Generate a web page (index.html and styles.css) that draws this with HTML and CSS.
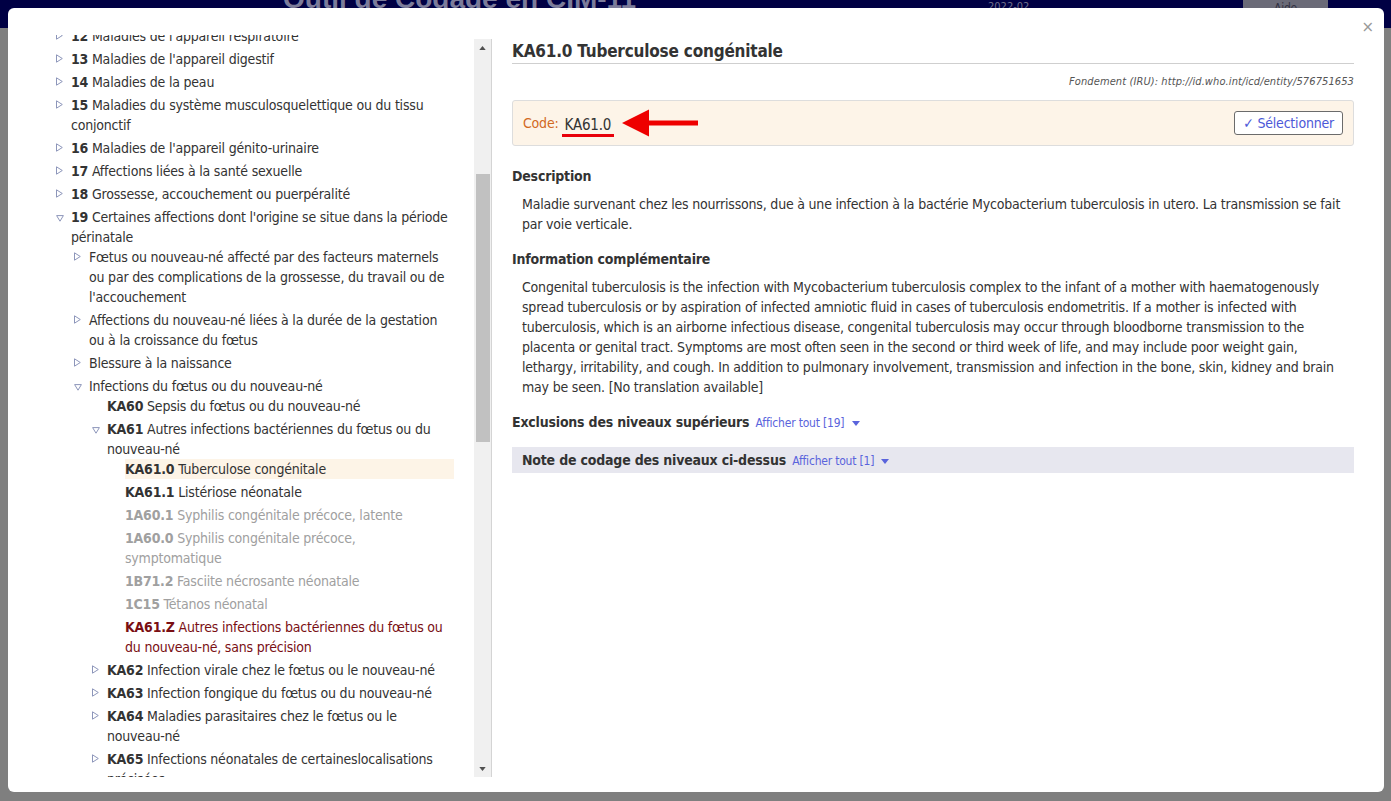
FILE: index.html
```html
<!DOCTYPE html>
<html lang="fr">
<head>
<meta charset="utf-8">
<title>Outil de Codage en CIM-11</title>
<link rel="stylesheet" href="styles.css">
</head>
<body>
<header class="topbar">
  <div class="app-title">Outil de Codage en CIM-11</div>
  <div class="app-version">2022-02</div>
  <div class="app-help">Aide</div>
</header>

<div class="modal">
  <button class="modal-close" type="button">×</button>
  <div class="modal-body">
    <aside class="tree-pane">
      <div class="tree-clip">
        <ul class="tree tree-root">
          <li><div class="row"><span class="tog"><svg class="tri" viewBox="0 0 7 9"><path d="M0.5 0.8 L6.3 4.5 L0.5 8.2 Z"/></svg></span><span class="txt"><b>12</b> Maladies de l'appareil respiratoire</span></div></li>
          <li><div class="row"><span class="tog"><svg class="tri" viewBox="0 0 7 9"><path d="M0.5 0.8 L6.3 4.5 L0.5 8.2 Z"/></svg></span><span class="txt"><b>13</b> Maladies de l'appareil digestif</span></div></li>
          <li><div class="row"><span class="tog"><svg class="tri" viewBox="0 0 7 9"><path d="M0.5 0.8 L6.3 4.5 L0.5 8.2 Z"/></svg></span><span class="txt"><b>14</b> Maladies de la peau</span></div></li>
          <li><div class="row"><span class="tog"><svg class="tri" viewBox="0 0 7 9"><path d="M0.5 0.8 L6.3 4.5 L0.5 8.2 Z"/></svg></span><span class="txt"><b>15</b> Maladies du système musculosquelettique ou du tissu conjonctif</span></div></li>
          <li><div class="row"><span class="tog"><svg class="tri" viewBox="0 0 7 9"><path d="M0.5 0.8 L6.3 4.5 L0.5 8.2 Z"/></svg></span><span class="txt"><b>16</b> Maladies de l'appareil génito-urinaire</span></div></li>
          <li><div class="row"><span class="tog"><svg class="tri" viewBox="0 0 7 9"><path d="M0.5 0.8 L6.3 4.5 L0.5 8.2 Z"/></svg></span><span class="txt"><b>17</b> Affections liées à la santé sexuelle</span></div></li>
          <li><div class="row"><span class="tog"><svg class="tri" viewBox="0 0 7 9"><path d="M0.5 0.8 L6.3 4.5 L0.5 8.2 Z"/></svg></span><span class="txt"><b>18</b> Grossesse, accouchement ou puerpéralité</span></div></li>
          <li>
            <div class="row"><span class="tog"><svg class="tri down" viewBox="0 0 8 7"><path d="M0.6 0.6 L7.4 0.6 L4 6.2 Z"/></svg></span><span class="txt"><b>19</b> Certaines affections dont l'origine se situe dans la période périnatale</span></div>
            <ul class="tree">
              <li><div class="row"><span class="tog"><svg class="tri" viewBox="0 0 7 9"><path d="M0.5 0.8 L6.3 4.5 L0.5 8.2 Z"/></svg></span><span class="txt">Fœtus ou nouveau-né affecté par des facteurs maternels ou par des complications de la grossesse, du travail ou de l'accouchement</span></div></li>
              <li><div class="row"><span class="tog"><svg class="tri" viewBox="0 0 7 9"><path d="M0.5 0.8 L6.3 4.5 L0.5 8.2 Z"/></svg></span><span class="txt">Affections du nouveau-né liées à la durée de la gestation ou à la croissance du fœtus</span></div></li>
              <li><div class="row"><span class="tog"><svg class="tri" viewBox="0 0 7 9"><path d="M0.5 0.8 L6.3 4.5 L0.5 8.2 Z"/></svg></span><span class="txt">Blessure à la naissance</span></div></li>
              <li>
                <div class="row"><span class="tog"><svg class="tri down" viewBox="0 0 8 7"><path d="M0.6 0.6 L7.4 0.6 L4 6.2 Z"/></svg></span><span class="txt">Infections du fœtus ou du nouveau-né</span></div>
                <ul class="tree">
                  <li><div class="row"><span class="tog"></span><span class="txt"><b>KA60</b> Sepsis du fœtus ou du nouveau-né</span></div></li>
                  <li>
                    <div class="row"><span class="tog"><svg class="tri down" viewBox="0 0 8 7"><path d="M0.6 0.6 L7.4 0.6 L4 6.2 Z"/></svg></span><span class="txt"><b>KA61</b> Autres infections bactériennes du fœtus ou du nouveau-né</span></div>
                    <ul class="tree">
                      <li><div class="row"><span class="tog"></span><span class="txt is-selected"><b>KA61.0</b> Tuberculose congénitale</span></div></li>
                      <li><div class="row"><span class="tog"></span><span class="txt"><b>KA61.1</b> Listériose néonatale</span></div></li>
                      <li><div class="row"><span class="tog"></span><span class="txt is-foreign"><b>1A60.1</b> Syphilis congénitale précoce, latente</span></div></li>
                      <li><div class="row"><span class="tog"></span><span class="txt is-foreign"><b>1A60.0</b> Syphilis congénitale précoce, symptomatique</span></div></li>
                      <li><div class="row"><span class="tog"></span><span class="txt is-foreign"><b>1B71.2</b> Fasciite nécrosante néonatale</span></div></li>
                      <li><div class="row"><span class="tog"></span><span class="txt is-foreign"><b>1C15</b> Tétanos néonatal</span></div></li>
                      <li><div class="row"><span class="tog"></span><span class="txt is-residual"><b>KA61.Z</b> Autres infections bactériennes du fœtus ou du nouveau-né, sans précision</span></div></li>
                    </ul>
                  </li>
                  <li><div class="row"><span class="tog"><svg class="tri" viewBox="0 0 7 9"><path d="M0.5 0.8 L6.3 4.5 L0.5 8.2 Z"/></svg></span><span class="txt"><b>KA62</b> Infection virale chez le fœtus ou le nouveau-né</span></div></li>
                  <li><div class="row"><span class="tog"><svg class="tri" viewBox="0 0 7 9"><path d="M0.5 0.8 L6.3 4.5 L0.5 8.2 Z"/></svg></span><span class="txt"><b>KA63</b> Infection fongique du fœtus ou du nouveau-né</span></div></li>
                  <li><div class="row"><span class="tog"><svg class="tri" viewBox="0 0 7 9"><path d="M0.5 0.8 L6.3 4.5 L0.5 8.2 Z"/></svg></span><span class="txt"><b>KA64</b> Maladies parasitaires chez le fœtus ou le nouveau-né</span></div></li>
                  <li><div class="row"><span class="tog"><svg class="tri" viewBox="0 0 7 9"><path d="M0.5 0.8 L6.3 4.5 L0.5 8.2 Z"/></svg></span><span class="txt"><b>KA65</b> Infections néonatales de certaineslocalisations précisées</span></div></li>
                </ul>
              </li>
            </ul>
          </li>
        </ul>
      </div>
      <div class="scrollbar">
        <div class="sb-arrow"><svg viewBox="0 0 8 5"><path d="M0 5 L4 0 L8 5 Z"/></svg></div>
        <div class="sb-track"><div class="sb-thumb"></div></div>
        <div class="sb-arrow"><svg viewBox="0 0 8 5"><path d="M0 0 L8 0 L4 5 Z"/></svg></div>
      </div>
    </aside>

    <main class="detail">
      <h1 class="detail-title">KA61.0 Tuberculose congénitale</h1>
      <div class="foundation">Fondement (IRU): http://id.who.int/icd/entity/576751653</div>
      <div class="codebox">
        <div class="code-line">
          <span class="code-label">Code:</span>
          <span class="code-value">KA61.0</span>
          <svg class="code-arrow" viewBox="0 0 77 28"><path d="M0 14 L27 0.5 L27 11.5 L76 11.5 L76 16.5 L27 16.5 L27 27.5 Z"/></svg>
        </div>
        <button class="select-btn" type="button">✓ Sélectionner</button>
      </div>

      <h2 class="sec-title">Description</h2>
      <p class="sec-text">Maladie survenant chez les nourrissons, due à une infection à la bactérie Mycobacterium tuberculosis in utero. La transmission se fait par voie verticale.</p>

      <h2 class="sec-title sec-gap">Information complémentaire</h2>
      <p class="sec-text">Congenital tuberculosis is the infection with Mycobacterium tuberculosis complex to the infant of a mother with haematogenously spread tuberculosis or by aspiration of infected amniotic fluid in cases of tuberculosis endometritis. If a mother is infected with tuberculosis, which is an airborne infectious disease, congenital tuberculosis may occur through bloodborne transmission to the placenta or genital tract. Symptoms are most often seen in the second or third week of life, and may include poor weight gain, lethargy, irritability, and cough. In addition to pulmonary involvement, transmission and infection in the bone, skin, kidney and brain may be seen. [No translation available]</p>

      <h2 class="sec-title sec-gap2">Exclusions des niveaux supérieurs <span class="show-all">Afficher tout [19] <svg class="caret" viewBox="0 0 8 5"><path d="M0 0 L8 0 L4 5 Z"/></svg></span></h2>

      <div class="note-bar">
        <h2 class="sec-title">Note de codage des niveaux ci-dessus <span class="show-all">Afficher tout [1] <svg class="caret" viewBox="0 0 8 5"><path d="M0 0 L8 0 L4 5 Z"/></svg></span></h2>
      </div>
    </main>
  </div>
</div>
</body>
</html>
```

FILE: styles.css
```css
* { box-sizing: border-box; }

html, body {
  margin: 0;
  padding: 0;
}

body {
  width: 1391px;
  height: 801px;
  overflow: hidden;
  background: #7f7f7f;
  font-family: "DejaVu Sans Condensed", "DejaVu Sans", sans-serif;
  font-size: 14px;
  letter-spacing: -0.2px;
  color: #333;
  position: relative;
}

/* background page header (dimmed by the modal backdrop) */
.topbar {
  height: 28px;
  background: #000044;
  display: flex;
  align-items: flex-start;
}
.app-title {
  width: 988px;
  flex: none;
  padding-left: 283px;
  margin-top: -15px;
  font-family: "Liberation Sans", sans-serif;
  font-size: 28px;
  font-weight: bold;
  line-height: 28px;
  letter-spacing: 0;
  color: #7c7c9a;
  white-space: nowrap;
  overflow: hidden;
}
.app-version {
  margin-top: 1px;
  font-size: 11px;
  line-height: 11px;
  letter-spacing: 0;
  color: #6f6f8a;
}
.app-help {
  margin-left: auto;
  margin-right: 63px;
  width: 85px;
  height: 20px;
  background: #6b6b78;
  color: #333344;
  font-size: 12px;
  text-align: center;
  padding-top: 1px;
}

/* modal */
.modal {
  position: absolute;
  left: 8px;
  top: 8px;
  width: 1376px;
  height: 784px;
  background: #fff;
  border-radius: 6px;
  padding-top: 27px;
}
.modal-close {
  position: absolute;
  right: 10px;
  top: 10px;
  border: 0;
  background: none;
  padding: 0;
  font-family: "DejaVu Sans", sans-serif;
  font-size: 15px;
  line-height: 18px;
  color: #999;
}
.modal-body {
  display: flex;
  height: 742px;
}

/* tree pane */
.tree-pane {
  width: 484px;
  flex: none;
  display: flex;
  padding-left: 45px;
}
.tree-clip {
  width: 401px;
  flex: none;
  overflow: hidden;
  height: 742px;
}
.tree {
  list-style: none;
  margin: 0;
  padding: 0;
}
.tree-root {
  margin-top: -9px;
}
.tree .tree {
  padding-left: 18px;
}
.tree li + li {
  margin-top: 3px;
}
.row {
  display: flex;
  line-height: 20px;
}
.tog {
  width: 18px;
  flex: none;
  display: flex;
  align-items: flex-start;
  padding-left: 3px;
  padding-top: 5px;
}
.tri {
  width: 7px;
  height: 9px;
  fill: none;
  stroke: #8d96ba;
  stroke-width: 1;
  stroke-linejoin: round;
}
.tri.down {
  width: 8px;
  height: 7px;
  margin-top: 3px;
}
.txt {
  flex: 1;
  min-width: 0;
}
.txt b {
  font-weight: bold;
}
.txt.is-selected {
  background: #fdf4e7;
}
.txt.is-foreign {
  color: #a0a0a0;
}
.txt.is-residual {
  color: #7a0f14;
}

/* fake scrollbar */
.scrollbar {
  margin-left: 20px;
  margin-top: 4px;
  width: 18px;
  height: 738px;
  flex: none;
  background: #f0f0f0;
  border-right: 1px solid #d4d4d4;
  display: flex;
  flex-direction: column;
}
.sb-arrow {
  height: 17px;
  flex: none;
  display: flex;
  align-items: center;
  justify-content: center;
}
.sb-arrow svg {
  width: 7px;
  height: 4px;
  fill: #505050;
}
.sb-track {
  flex: 1;
  padding: 118px 1px 0 2px;
}
.sb-thumb {
  height: 268px;
  background: #c1c1c1;
}

/* detail pane */
.detail {
  flex: 1;
  padding: 5px 30px 0 20px;
}
.detail-title {
  margin: 0;
  font-size: 17px;
  line-height: 22px;
  font-weight: bold;
  color: #333;
  padding-bottom: 1px;
  border-bottom: 1px solid #cfcfcf;
}
.foundation {
  margin-top: 11px;
  text-align: right;
  font-size: 11px;
  line-height: 14px;
  font-style: italic;
  letter-spacing: 0.1px;
  color: #555;
}
.codebox {
  margin-top: 11px;
  height: 46px;
  background: #fdf4e8;
  border: 1px solid #ddd;
  border-radius: 3px;
  padding: 0 10px;
  display: flex;
  align-items: center;
  justify-content: space-between;
}
.code-line {
  display: flex;
  align-items: center;
  height: 24px;
  margin-top: -1px;
}
.code-label {
  color: #d2691e;
  font-size: 14px;
  line-height: 18px;
}
.code-value {
  margin-left: 3px;
  padding: 0 3px 0;
  font-size: 15px;
  line-height: 18px;
  color: #333;
  border-bottom: 3px solid #e8000b;
  margin-top: 4px;
  margin-bottom: -3px;
}
.code-arrow {
  width: 77px;
  height: 28px;
  margin: -2px 0 -2px 8px;
  fill: #ee0000;
}
.select-btn {
  height: 24px;
  padding: 0 8px;
  background: #fff;
  border: 1px solid #6b6b6b;
  border-radius: 3px;
  font-family: inherit;
  font-size: 14px;
  letter-spacing: -0.2px;
  color: #4c58d8;
  line-height: 20px;
}

.sec-title {
  margin: 20px 0 0;
  font-size: 14px;
  line-height: 20px;
  font-weight: bold;
  color: #333;
}
.sec-gap {
  margin-top: 15px;
}
.sec-gap2 {
  margin-top: 15px;
}
.sec-text {
  margin: 8px 0 0;
  padding-left: 10px;
  line-height: 20px;
}
.show-all {
  font-weight: normal;
  font-size: 12px;
  color: #5a64dc;
  margin-left: 2px;
}
.caret {
  width: 8px;
  height: 5px;
  fill: #5a64dc;
  margin-left: 4px;
  vertical-align: 1px;
}
.note-bar {
  margin-top: 14px;
  height: 26px;
  background: #e7e7ef;
  padding: 3px 10px;
}
.note-bar .sec-title {
  margin: 0;
}
```
